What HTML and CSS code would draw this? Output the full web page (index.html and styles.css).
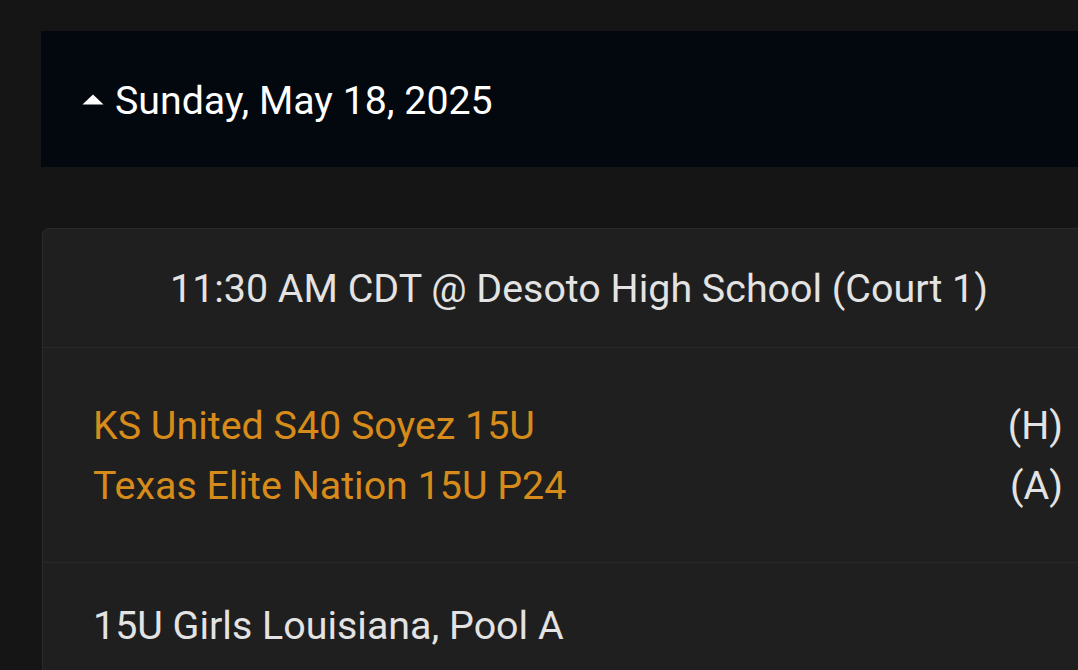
FILE: index.html
```html
<!DOCTYPE html>
<html>
<head>
<meta charset="utf-8">
<link rel="stylesheet" href="styles.css">
</head>
<body>
<div class="page">
  <div class="day-header">
    <svg class="caret" width="22" height="11" viewBox="0 0 22 11"><polygon points="11,0.5 21.5,10.5 0.5,10.5" fill="#ffffff"/></svg>
    <span class="day-title">Sunday, May 18, 2025</span>
  </div>
  <div class="card">
    <div class="card-head">11:30 AM CDT @ Desoto High School (Court 1)</div>
    <div class="teams">
      <div class="team"><span class="team-name">KS United S40 Soyez 15U</span><span class="side">(H)</span></div>
      <div class="team"><span class="team-name">Texas Elite Nation 15U P24</span><span class="side">(A)</span></div>
    </div>
    <div class="pool">15U Girls Louisiana, Pool A</div>
  </div>
</div>
</body>
</html>
```
FILE: styles.css
```css
html, body {
  margin: 0;
  padding: 0;
  background: #151515;
  overflow: hidden;
  font-family: Roboto, "Liberation Sans", sans-serif;
}
.page {
  padding: 31px 0 0 41px;
  width: 1073px;
}
.day-header {
  height: 136px;
  background: #03070e;
  display: flex;
  align-items: center;
  padding-left: 41px;
  gap: 11px;
}
.caret {
  margin-top: 0;
}
.day-title {
  color: #ffffff;
  font-size: 39.3px;
  margin-top: 3px;
}
.card {
  margin-top: 61px;
  margin-left: 1px;
  width: 1072px;
  background: #1f1f1f;
  border: 1px solid #2a2a2a;
  border-radius: 7px;
}
.card-head {
  height: 118px;
  display: flex;
  align-items: center;
  justify-content: center;
  color: #e3e3e3;
  font-size: 39.4px;
  border-bottom: 1px solid #282828;
}
.teams {
  padding: 47px 52px 47px 50px;
  border-bottom: 1px solid #282828;
}
.team {
  display: flex;
  justify-content: space-between;
  height: 60px;
  align-items: center;
  font-size: 39.4px;
}
.team-name {
  color: #d68b1b;
}
.side {
  color: #e3e3e3;
}
.pool {
  padding: 39px 52px 36px 50px;
  color: #e3e3e3;
  font-size: 39.4px;
}
```
